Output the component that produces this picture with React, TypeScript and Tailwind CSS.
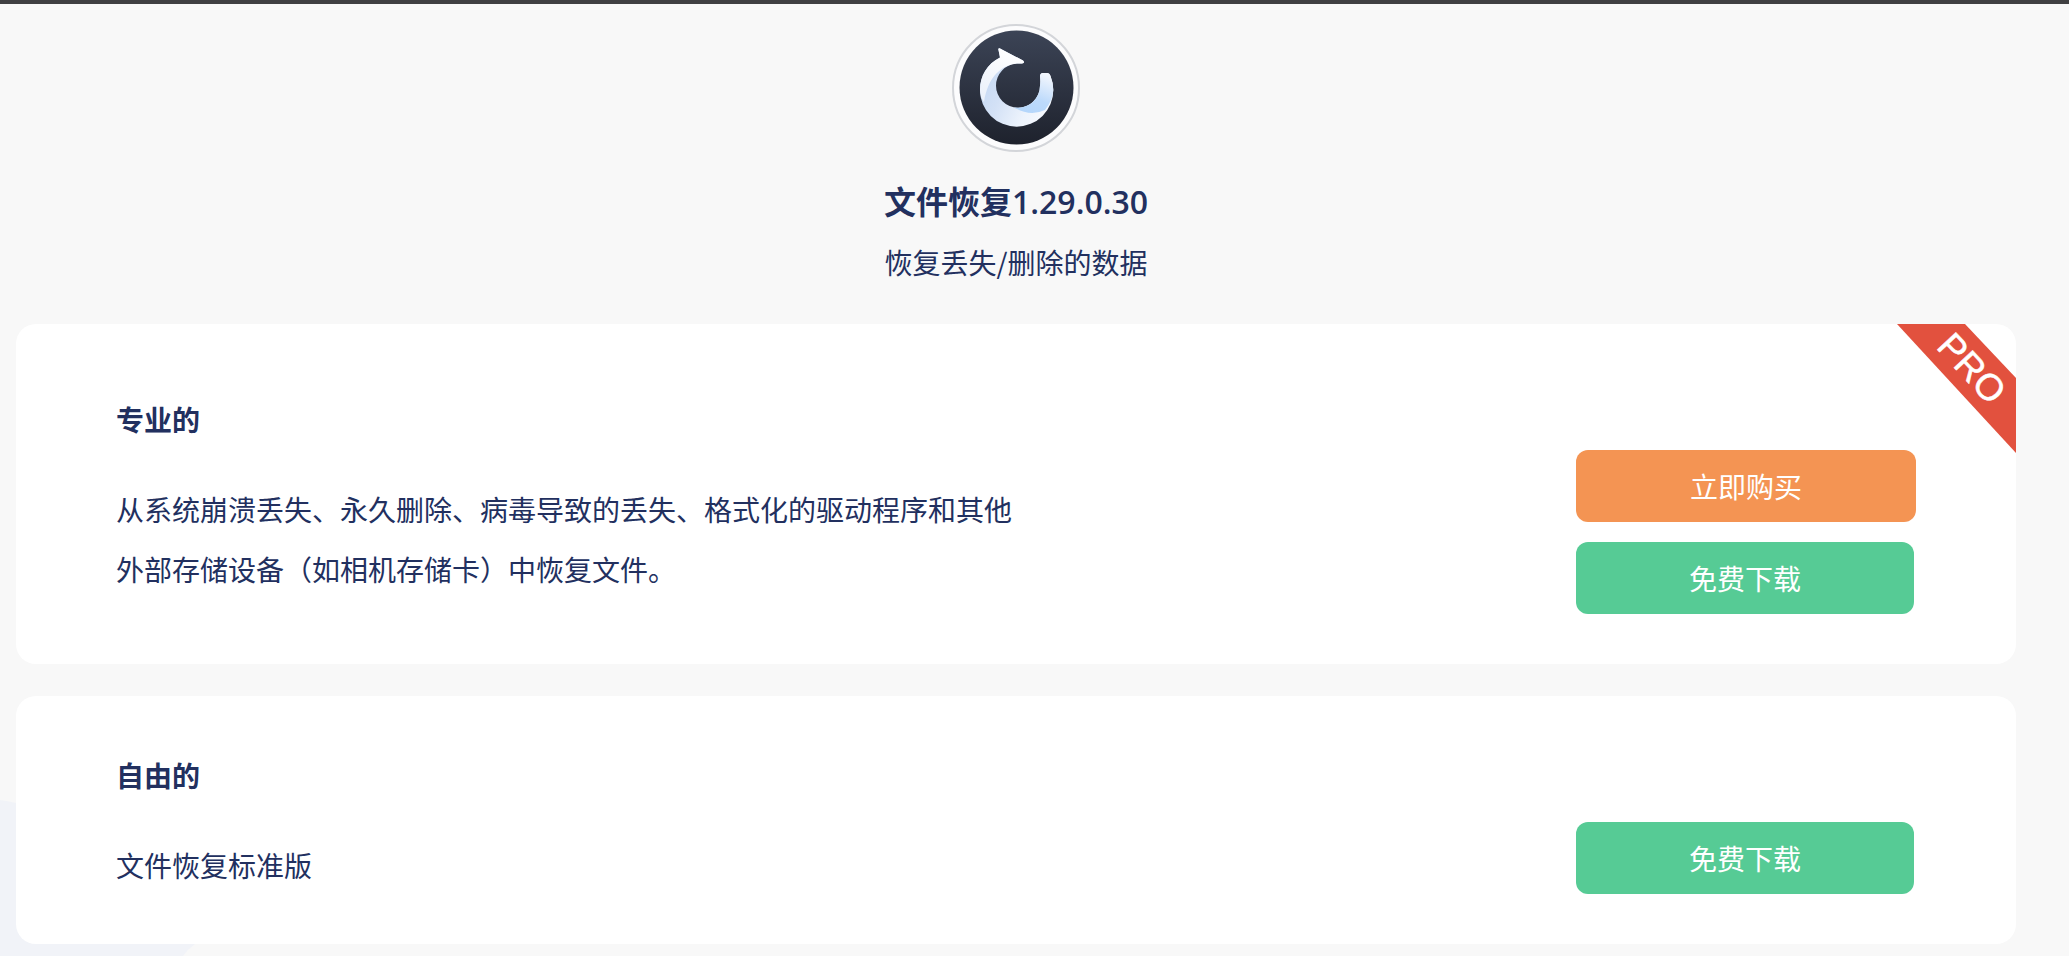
import type { ReactNode } from "react";

function Logo() {
  return (
    <svg
      viewBox="0 0 128 128"
      className="w-32 h-32"
      role="img"
      aria-label="文件恢复"
    >
      <defs>
        <linearGradient id="disc" x1="0" y1="0" x2="0" y2="1">
          <stop offset="0" stopColor="#3c4456" />
          <stop offset="1" stopColor="#1e222d" />
        </linearGradient>
        <linearGradient id="body" x1="0" y1="0.3" x2="1" y2="0.8">
          <stop offset="0" stopColor="#c3d7f3" />
          <stop offset="0.35" stopColor="#d3e1f6" />
          <stop offset="0.7" stopColor="#edf3fc" />
          <stop offset="1" stopColor="#f8fafe" />
        </linearGradient>
        <linearGradient id="head" x1="0.6" y1="0" x2="0.2" y2="1">
          <stop offset="0" stopColor="#ffffff" />
          <stop offset="1" stopColor="#eaf0fa" />
        </linearGradient>
        <linearGradient id="tail" x1="0.7" y1="0" x2="0.3" y2="1">
          <stop offset="0" stopColor="#f2f6fd" />
          <stop offset="0.6" stopColor="#bddafb" />
          <stop offset="1" stopColor="#b4d6fb" />
        </linearGradient>
      </defs>
      <circle cx="64" cy="64" r="63" fill="#fcfcfd" stroke="#d3d5d9" strokeWidth="2" />
      <circle cx="64.5" cy="63.5" r="57" fill="url(#disc)" />
      <path
        d="M46.3 25 Q47 23.5 49 25 L71 36.5 Q73.5 39 70 39.5 L65 39.5 A22.2 22.2 0 0 0 44 61.7 A22 22 0 0 0 88 61.7 Q88.7 58 88 52 Q88.3 49 91 49 L95 49 Q97.5 49 98.5 52 Q101.3 59 101.3 66 A36.6 36.6 0 0 1 28 66 C28 52 35 40 48 33.5 Z"
        fill="url(#body)"
      />
      <path
        d="M46.3 25 Q47 23.5 49 25 L71 36.5 Q73.5 39 70 39.5 L65 39.5 C50 41 36 52 32 78 Q28 73 28 66 C28 52 35 40 48 33.5 Z"
        fill="url(#head)"
      />
      <path
        d="M62 83.4 A22 22 0 0 0 88 61.7 Q88.7 58 88 52 Q88.3 49 91 49 L95 49 Q97.5 49 98.5 52 Q101.3 59 101.3 66 Q101 76 93 86 Q78 93 62 83.4 Z"
        fill="url(#tail)"
      />
    </svg>
  );
}

function ProRibbon() {
  return (
    <svg
      viewBox="0 0 119 129"
      className="absolute top-0 right-0 w-[119px] h-[129px]"
    >
      <polygon points="0,0 68,0 119,54 119,129" fill="#e2513e" />
      <text
        transform="translate(75 44) rotate(47)"
        y="13"
        textAnchor="middle"
        fontFamily="'Liberation Sans', Arial, sans-serif"
        fontSize="37"
        fill="#fff"
        stroke="#fff"
        strokeWidth="0.5"
      >
        PRO
      </text>
    </svg>
  );
}

type PlanProps = {
  title: string;
  description: string;
  textPadding: string;
  ribbon?: ReactNode;
  children: ReactNode;
};

function Plan({ title, description, textPadding, ribbon, children }: PlanProps) {
  return (
    <section className="relative flex items-end justify-between gap-10 overflow-hidden rounded-[20px] bg-white px-[100px]">
      <div className={`max-w-[910px] leading-[60px] ${textPadding}`}>
        <h2 className="font-bold">{title}</h2>
        <p className="mt-[30px]">{description}</p>
      </div>
      <div className="flex w-[340px] shrink-0 flex-col gap-5 pb-[50px] text-white">
        {children}
      </div>
      {ribbon}
    </section>
  );
}

function DownloadButton() {
  return (
    <button className="mr-0.5 h-[72px] rounded-xl bg-[#56cb95] hover:bg-[#48bd87]">
      免费下载
    </button>
  );
}

export default function App() {
  return (
    <div className="relative isolate min-h-screen overflow-hidden border-t-4 border-[#404042] bg-[#f8f8f8] pb-3 text-[28px] text-[#22305f] font-['Noto_Sans_CJK_SC',sans-serif]">
      <svg
        viewBox="0 0 240 156"
        className="absolute bottom-0 left-0 -z-10 w-[240px] h-[156px]"
        aria-hidden="true"
      >
        <path
          d="M0 0 Q8 1 16 3 C130 20 240 90 195 144 Q187 150 183 156 L0 156 Z"
          fill="#f1f3f8"
        />
      </svg>

      <div className="ml-4 mr-[53px]">
        <header className="flex flex-col items-center pt-5 pb-[42px]">
          <Logo />
          <h1 className="mt-6 text-[32px] leading-[48px] font-bold">
            文件恢复
            <span className="leading-none font-semibold font-['Open_Sans',sans-serif]">
              1.29.0.30
            </span>
          </h1>
          <p className="mt-[18px] leading-10">恢复丢失/删除的数据</p>
        </header>

        <main className="flex flex-col gap-8">
          <Plan
            title="专业的"
            description="从系统崩溃丢失、永久删除、病毒导致的丢失、格式化的驱动程序和其他外部存储设备（如相机存储卡）中恢复文件。"
            textPadding="pt-[65px] pb-[65px]"
            ribbon={<ProRibbon />}
          >
            <button className="h-[72px] rounded-xl bg-[#f49453] hover:bg-[#e88642]">
              立即购买
            </button>
            <DownloadButton />
          </Plan>
          <Plan
            title="自由的"
            description="文件恢复标准版"
            textPadding="pt-[49px] pb-[49px]"
          >
            <DownloadButton />
          </Plan>
        </main>
      </div>
    </div>
  );
}
